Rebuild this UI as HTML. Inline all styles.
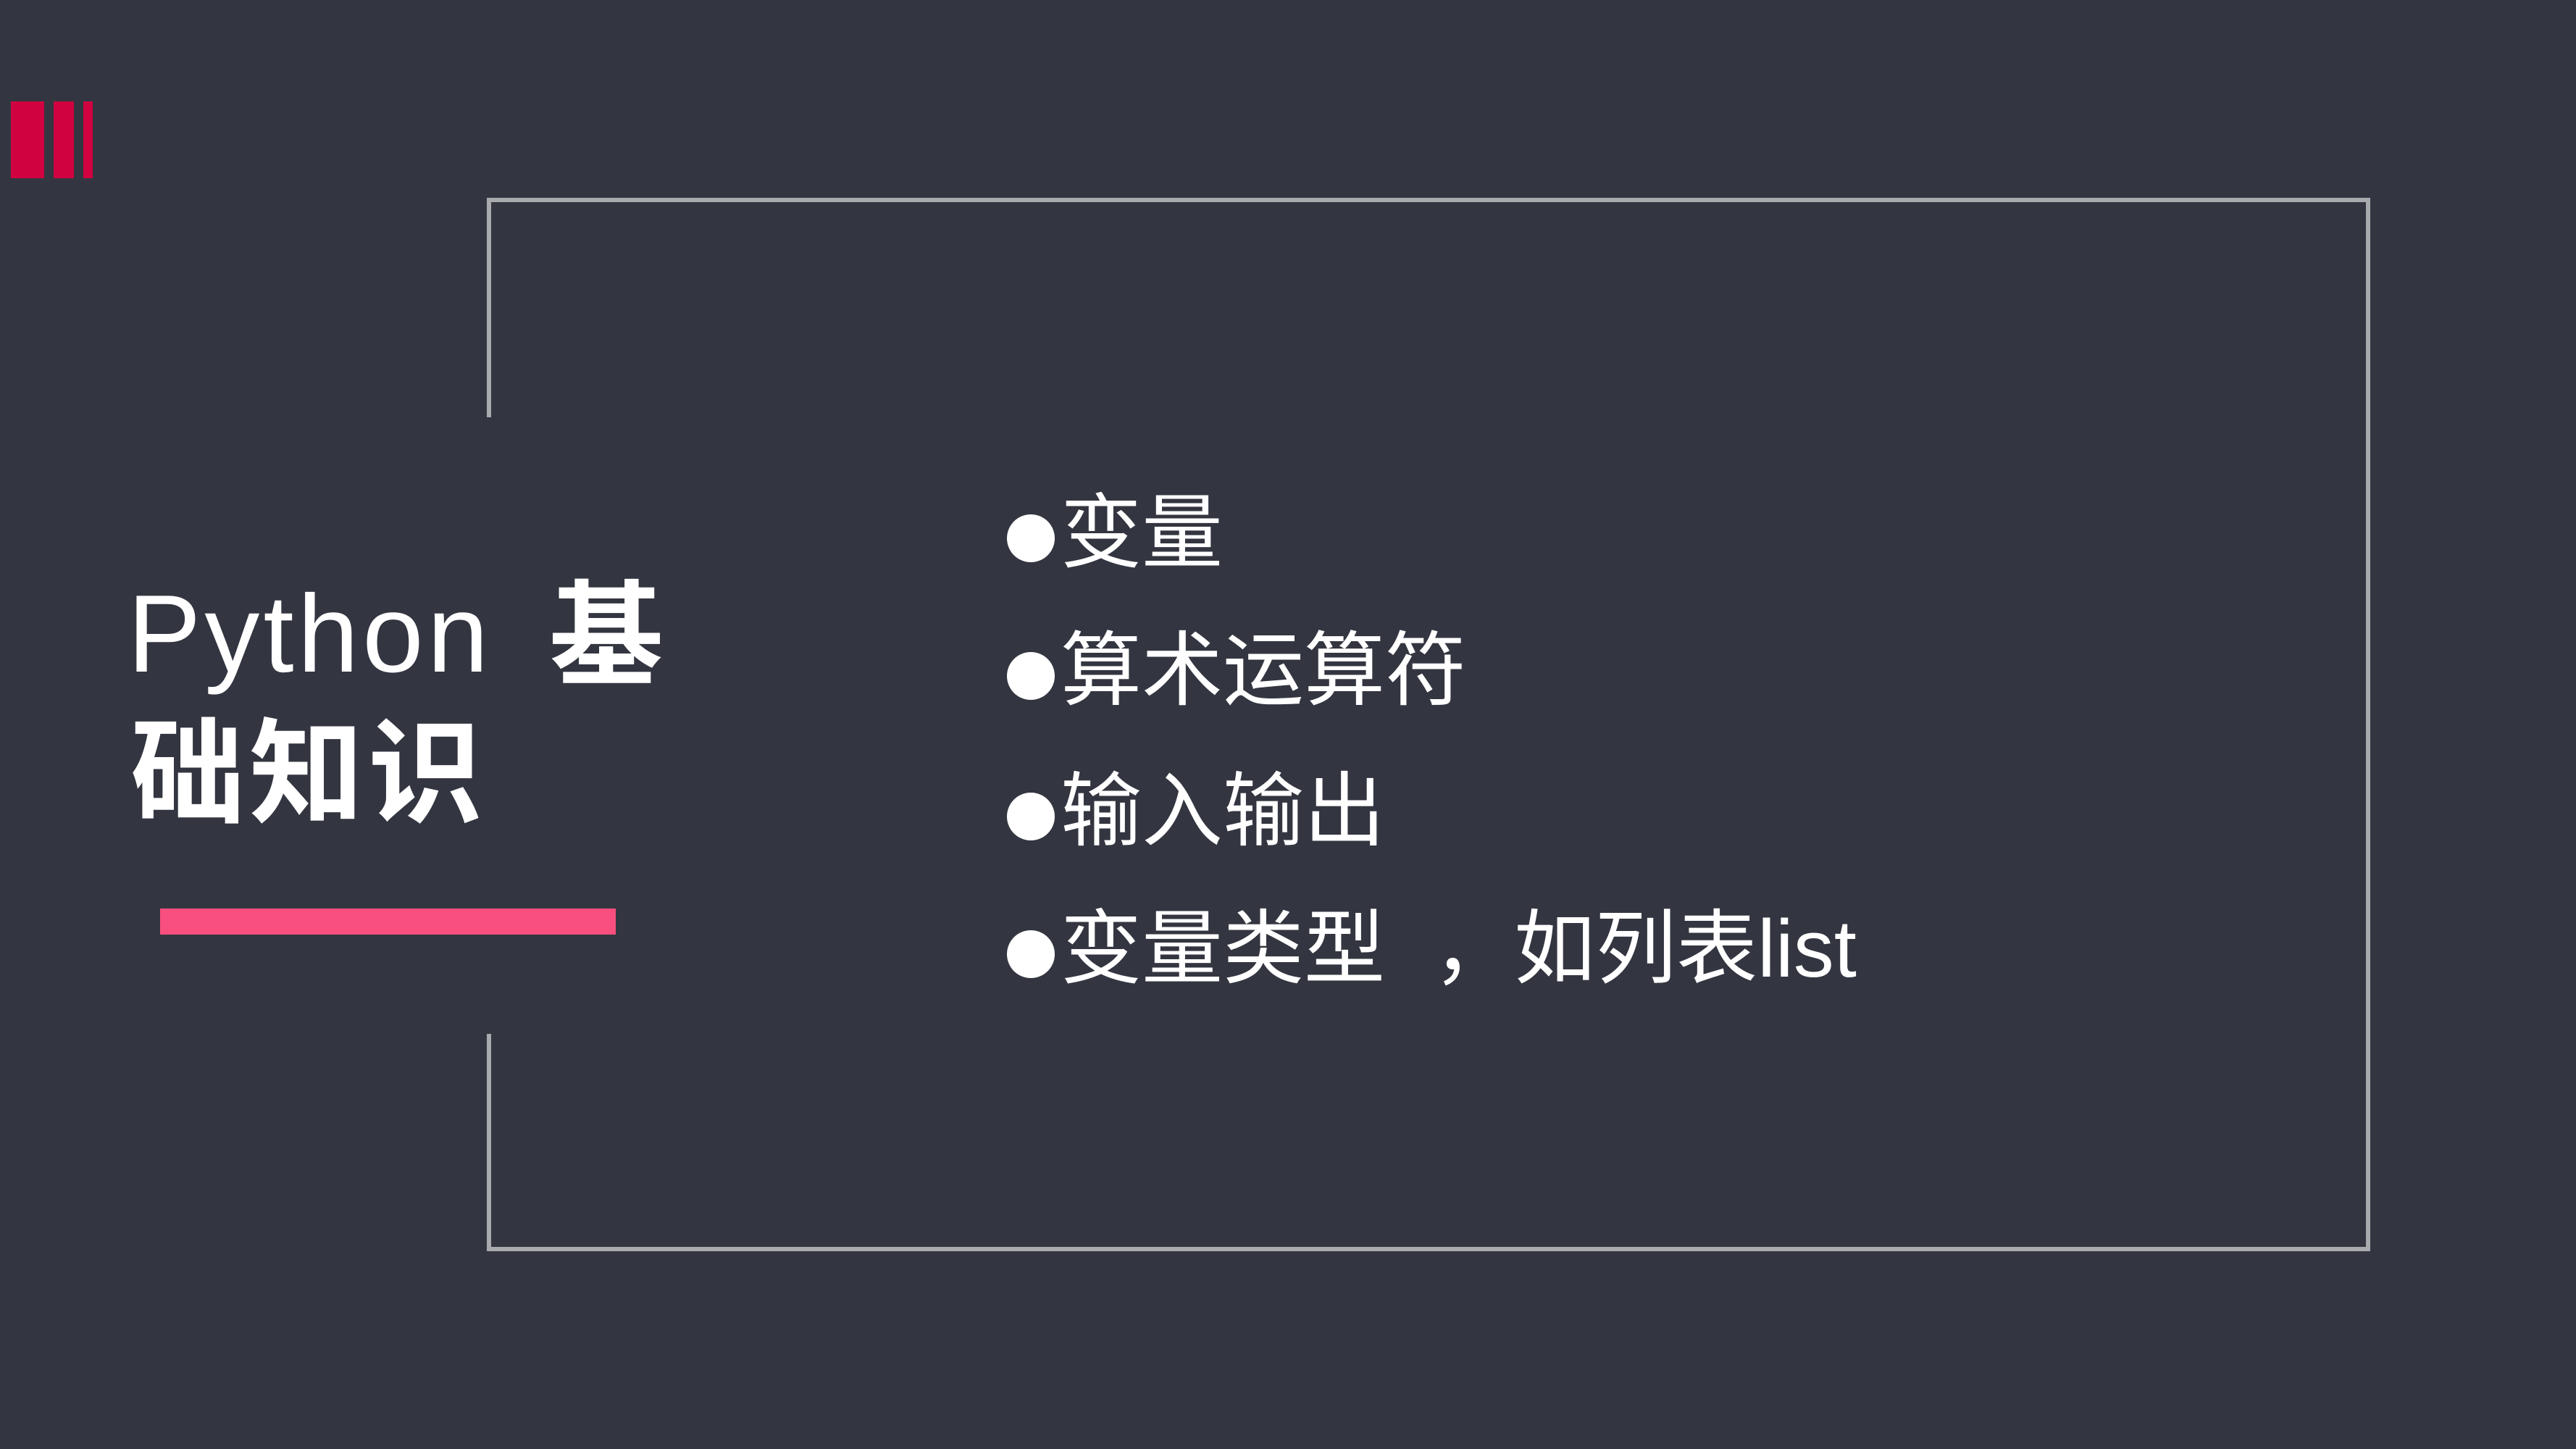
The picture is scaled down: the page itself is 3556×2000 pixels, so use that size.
<!DOCTYPE html>
<html><head><meta charset="utf-8">
<style>
html,body{margin:0;padding:0;}
body{width:3556px;height:2000px;background:#333640;position:relative;overflow:hidden;font-family:"Liberation Sans","Noto Sans CJK SC",sans-serif;color:#fff;}
.a{position:absolute;}
.bar{background:#d0023f;top:140px;height:106px;}
.ln{background:#a9aaae;}
.py{font-family:"Liberation Sans",sans-serif;font-size:152px;line-height:190px;white-space:nowrap;letter-spacing:5px;}
.cj{font-family:"Noto Sans CJK SC",sans-serif;font-weight:bold;font-size:158px;line-height:158px;letter-spacing:6px;white-space:nowrap;}
.li{left:1390px;font-size:112px;line-height:112px;white-space:nowrap;font-family:"Liberation Sans","Noto Sans CJK SC",sans-serif;}
.dot{display:inline-block;width:66px;height:66px;border-radius:50%;background:#fff;margin-right:8px;vertical-align:-2px;}
</style></head><body>
<div class="a bar" style="left:15px;width:46px"></div>
<div class="a bar" style="left:74px;width:28px"></div>
<div class="a bar" style="left:115px;width:13px"></div>

<div class="a ln" style="left:672px;top:273px;width:2600px;height:6px"></div>
<div class="a ln" style="left:3266px;top:273px;width:6px;height:1454px"></div>
<div class="a ln" style="left:672px;top:1721px;width:2600px;height:6px"></div>
<div class="a ln" style="left:672px;top:273px;width:6px;height:303px"></div>
<div class="a ln" style="left:672px;top:1427px;width:6px;height:300px"></div>

<div class="a py" style="left:176px;top:780px">Python</div>
<div class="a cj" style="left:758px;top:786px">基</div>
<div class="a cj" style="left:180px;top:976px">础知识</div>

<div class="a" style="left:221px;top:1254px;width:629px;height:36px;background:#f94f7e"></div>

<div class="a li" style="top:680px"><span class="dot"></span>变量</div>
<div class="a li" style="top:870px"><span class="dot"></span>算术运算符</div>
<div class="a li" style="top:1064px"><span class="dot"></span>输入输出</div>
<div class="a li" style="top:1254px"><span class="dot"></span>变量类型<span style="margin-left:66px">，</span>如列表list</div>
</body></html>
